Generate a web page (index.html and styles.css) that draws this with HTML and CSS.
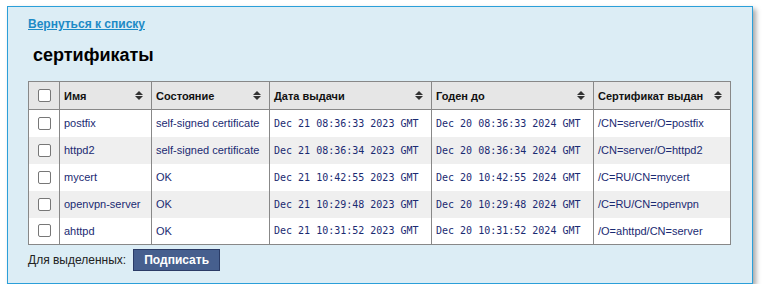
FILE: index.html
```html
<!DOCTYPE html>
<html>
<head>
<meta charset="utf-8">
<link rel="stylesheet" href="styles.css">
</head>
<body>
<div class="panel">
  <a class="back" href="#">Вернуться к списку</a>
  <h1 class="title">сертификаты</h1>
  <table class="certs">
    <colgroup>
      <col class="c-check"><col class="c-name"><col class="c-state"><col class="c-date"><col class="c-date"><col class="c-issuer">
    </colgroup>
    <thead>
      <tr>
        <th class="chk"><input type="checkbox" class="cb"></th>
        <th><div class="th-in"><span>Имя</span><i class="sort"></i></div></th>
        <th><div class="th-in"><span>Состояние</span><i class="sort"></i></div></th>
        <th><div class="th-in"><span>Дата выдачи</span><i class="sort"></i></div></th>
        <th><div class="th-in"><span>Годен до</span><i class="sort"></i></div></th>
        <th><div class="th-in"><span>Сертификат выдан</span><i class="sort"></i></div></th>
      </tr>
    </thead>
    <tbody>
      <tr>
        <td class="chk"><input type="checkbox" class="cb"></td>
        <td>postfix</td>
        <td>self-signed certificate</td>
        <td class="mono">Dec 21 08:36:33 2023 GMT</td>
        <td class="mono">Dec 20 08:36:33 2024 GMT</td>
        <td>/CN=server/O=postfix</td>
      </tr>
      <tr>
        <td class="chk"><input type="checkbox" class="cb"></td>
        <td>httpd2</td>
        <td>self-signed certificate</td>
        <td class="mono">Dec 21 08:36:34 2023 GMT</td>
        <td class="mono">Dec 20 08:36:34 2024 GMT</td>
        <td>/CN=server/O=httpd2</td>
      </tr>
      <tr>
        <td class="chk"><input type="checkbox" class="cb"></td>
        <td>mycert</td>
        <td>OK</td>
        <td class="mono">Dec 21 10:42:55 2023 GMT</td>
        <td class="mono">Dec 20 10:42:55 2024 GMT</td>
        <td>/C=RU/CN=mycert</td>
      </tr>
      <tr>
        <td class="chk"><input type="checkbox" class="cb"></td>
        <td>openvpn-server</td>
        <td>OK</td>
        <td class="mono">Dec 21 10:29:48 2023 GMT</td>
        <td class="mono">Dec 20 10:29:48 2024 GMT</td>
        <td>/C=RU/CN=openvpn</td>
      </tr>
      <tr>
        <td class="chk"><input type="checkbox" class="cb"></td>
        <td>ahttpd</td>
        <td>OK</td>
        <td class="mono">Dec 21 10:31:52 2023 GMT</td>
        <td class="mono">Dec 20 10:31:52 2024 GMT</td>
        <td>/O=ahttpd/CN=server</td>
      </tr>
    </tbody>
  </table>
  <div class="actions">
    <span class="actions-label">Для выделенных:</span>
    <button class="btn" type="button">Подписать</button>
  </div>
</div>
</body>
</html>
```

FILE: styles.css
```css
html, body {
  margin: 0;
  padding: 0;
  background: #ffffff;
}
body {
  font-family: "Liberation Sans", Arial, sans-serif;
  color: #222;
}
.panel {
  box-sizing: border-box;
  margin: 6px 0 0 7px;
  width: 746px;
  height: 278px;
  padding: 10px 20px 0 20px;
  background: #dcedf5;
  border: 1px solid #2b9fd9;
  box-shadow: 3px 3px 5px rgba(0, 0, 0, 0.35);
}
.back {
  display: block;
  font-size: 12px;
  line-height: 14px;
  font-weight: bold;
  color: #1c8ac6;
  text-decoration: underline;
}
.title {
  margin: 13px 0 0 5px;
  font-size: 18px;
  line-height: 22px;
  font-weight: bold;
  color: #000;
}
.certs {
  margin-top: 15px;
  border-collapse: collapse;
  table-layout: fixed;
  width: 703px;
  border: 1px solid #888;
  font-size: 11px;
  color: #1a2a72;
}
.c-check { width: 31px; }
.c-name { width: 92px; }
.c-state { width: 118px; }
.c-date { width: 162px; }
.c-issuer { width: 137px; }
.certs th, .certs td {
  border-left: 1px solid #888;
  border-right: 1px solid #888;
  padding: 0 5px 0 4px;
  text-align: left;
  white-space: nowrap;
  overflow: hidden;
}
.certs th {
  height: 27px;
  background: #e6e6e6;
  border-bottom: 1px solid #888;
  font-weight: bold;
  color: #111;
  font-size: 11px;
}
.th-in {
  display: flex;
  align-items: center;
  justify-content: space-between;
  padding-right: 3px;
}
.sort {
  display: flex;
  flex-direction: column;
  gap: 1px;
  width: 8px;
}
.sort::before, .sort::after {
  content: "";
  display: block;
  width: 0;
  height: 0;
  border-left: 4px solid transparent;
  border-right: 4px solid transparent;
}
.sort::before { border-bottom: 4px solid #333; }
.sort::after { border-top: 4px solid #333; }
.certs td {
  height: 27px;
  box-sizing: border-box;
}
.certs tbody tr {
  background: #fff;
}
.certs tbody tr:nth-child(even) {
  background: #efefef;
}
.certs .chk {
  padding: 0;
  text-align: center;
}
.cb {
  appearance: none;
  -webkit-appearance: none;
  display: block;
  margin: 0 auto;
  width: 13px;
  height: 13px;
  border: 1px solid #777;
  border-radius: 2px;
  background: #fff;
}
.mono {
  font-family: "DejaVu Sans Mono", monospace;
  font-size: 10px;
}
.actions {
  display: flex;
  align-items: center;
  gap: 7px;
  margin-top: 4px;
}
.actions-label {
  font-size: 12px;
  color: #222;
}
.btn {
  box-sizing: border-box;
  width: 87px;
  height: 22px;
  margin: 0;
  padding: 0;
  background: #465f8e;
  border: 1px solid #2a3b66;
  color: #fff;
  font-family: "Liberation Sans", Arial, sans-serif;
  font-size: 12px;
  font-weight: bold;
}
```
